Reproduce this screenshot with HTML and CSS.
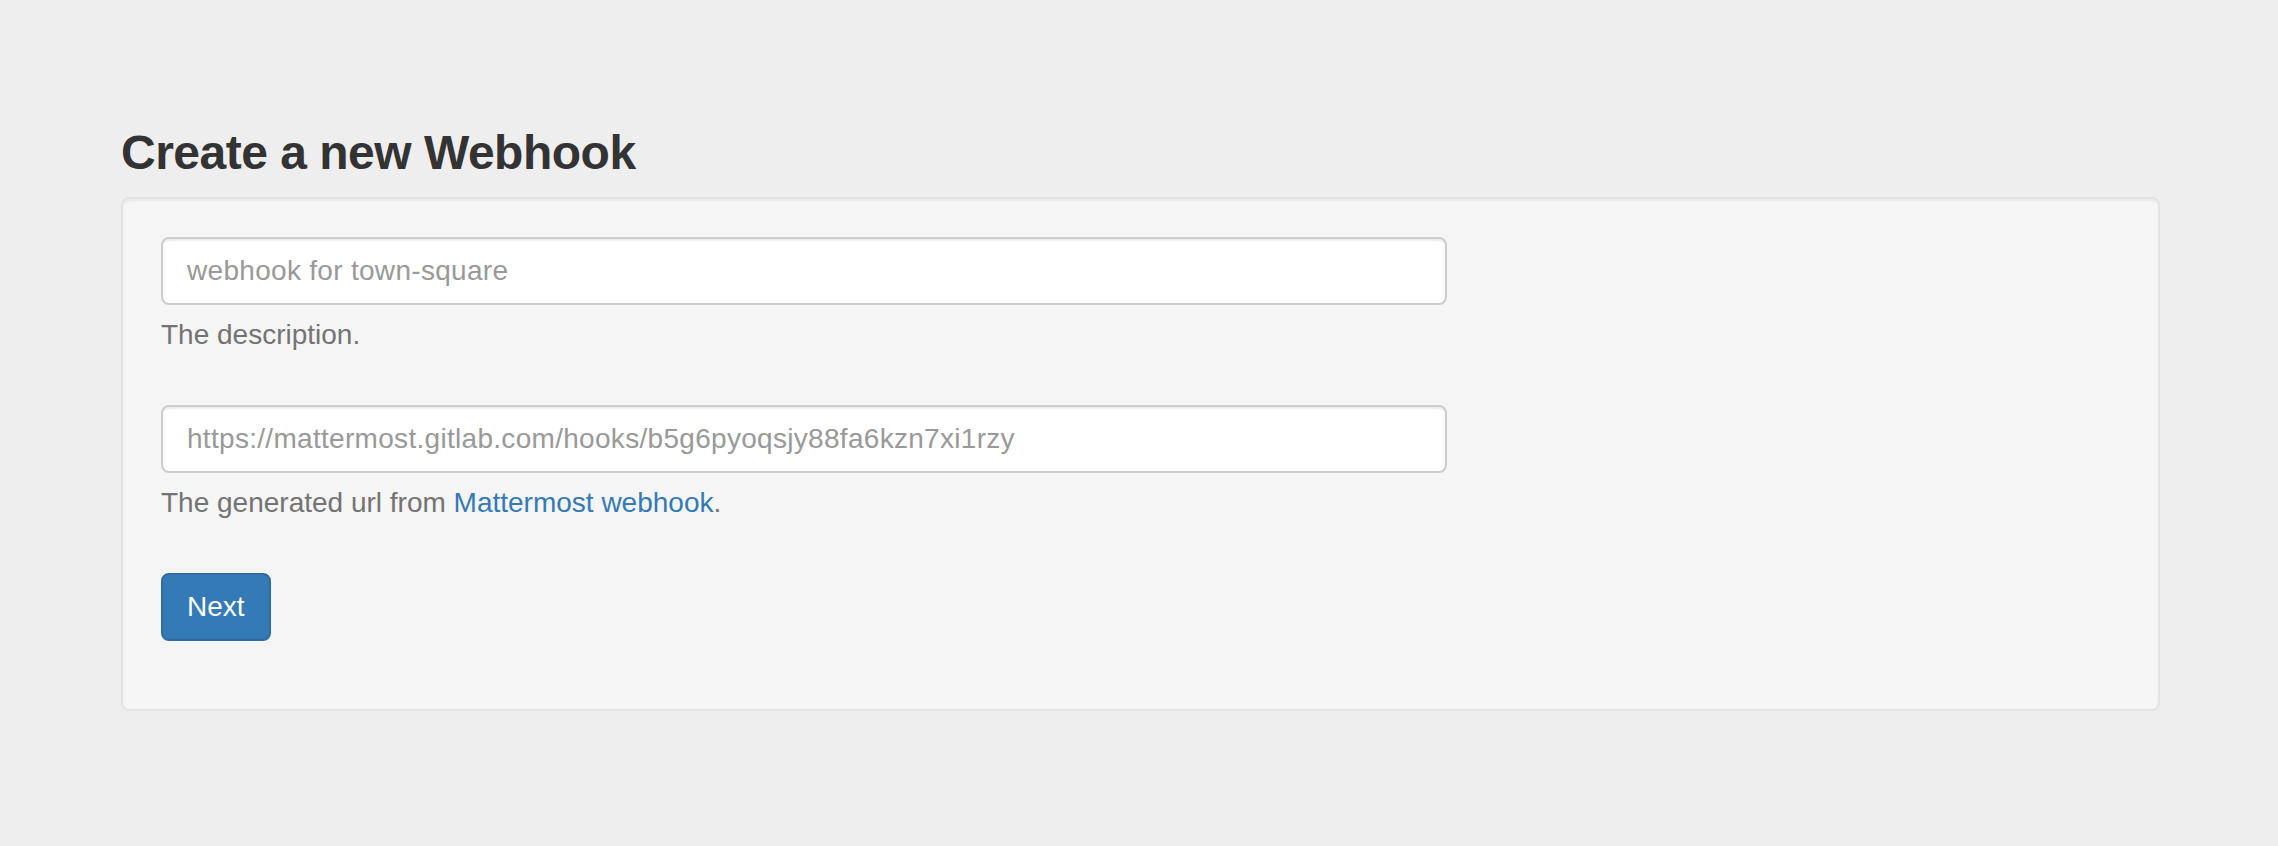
FILE: index.html
```html
<!DOCTYPE html>
<html lang="en">
<head>
<meta charset="utf-8">
<title>Create a new Webhook</title>
<link rel="stylesheet" href="styles.css">
</head>
<body>
<div class="page">
  <h3 class="title">Create a new Webhook</h3>
  <div class="well">
    <form class="form">
      <div class="form-group">
        <input class="form-control" type="text" placeholder="webhook for town-square">
        <p class="help-block">The description.</p>
      </div>
      <div class="form-group">
        <input class="form-control" type="text" placeholder="https://mattermost.gitlab.com/hooks/b5g6pyoqsjy88fa6kzn7xi1rzy">
        <p class="help-block">The generated url from <a class="link" href="#">Mattermost webhook</a>.</p>
      </div>
      <div class="form-group">
        <button class="btn" type="button">Next</button>
      </div>
    </form>
  </div>
</div>
</body>
</html>
```

FILE: styles.css
```css
* { box-sizing: border-box; }
html, body {
  margin: 0;
  padding: 0;
  background: #eeeeee;
  font-family: "Liberation Sans", Arial, sans-serif;
  font-size: 28px;
  line-height: 40px;
  color: #333333;
}
.page {
  padding: 87px 118px 0 121px;
}
.title {
  margin: 40px 0 17px;
  font-size: 48px;
  line-height: 1.1;
  font-weight: 700;
  letter-spacing: -0.5px;
  color: #333333;
}
.well {
  background: #f5f5f5;
  border: 2px solid #e3e3e3;
  border-radius: 8px;
  box-shadow: inset 0 2px 2px rgba(0,0,0,0.05);
  padding: 38px;
}
.form { margin: 0; display: flow-root; }
.form-group { margin-bottom: 30px; display: flow-root; }
.form-control {
  display: block;
  width: 1286px;
  height: 68px;
  padding: 12px 24px;
  font-family: inherit;
  font-size: 28px;
  line-height: 40px;
  letter-spacing: 0.3px;
  color: #555555;
  background: #ffffff;
  border: 2px solid #cccccc;
  border-radius: 8px;
  box-shadow: inset 0 2px 2px rgba(0,0,0,0.075);
  outline: none;
}
.form-control::placeholder { color: #999999; opacity: 1; }
.help-block {
  margin: 10px 0 20px;
  color: #737373;
}
.link { color: #337ab7; text-decoration: none; }
.btn {
  display: inline-block;
  height: 68px;
  padding: 12px 24px;
  font-family: inherit;
  font-size: 28px;
  line-height: 40px;
  color: #ffffff;
  background: #337ab7;
  border: 2px solid #2e6da4;
  border-radius: 8px;
  cursor: pointer;
}
```
